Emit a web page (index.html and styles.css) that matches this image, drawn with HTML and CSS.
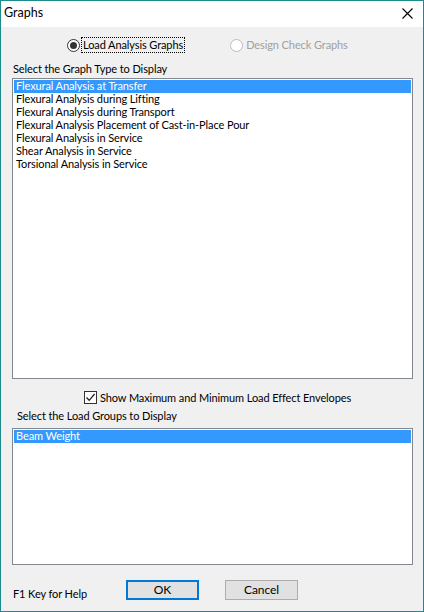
FILE: index.html
```html
<!DOCTYPE html>
<html>
<head>
<meta charset="utf-8">
<link rel="stylesheet" href="styles.css">
</head>
<body>
<div class="window">
  <div class="titlebar">
    <span class="title">Graphs</span>
    <svg class="close" width="11" height="11" viewBox="0 0 11 11"><path d="M0.5 0.5 L10.5 10.5 M10.5 0.5 L0.5 10.5" stroke="#000" stroke-width="1.1" fill="none"/></svg>
  </div>
  <div class="content">
    <div class="radios">
      <div class="radio-group first">
        <span class="radio checked"><span class="dot"></span></span>
        <span class="radio-label focus">Load Analysis Graphs</span>
      </div>
      <div class="radio-group second disabled">
        <span class="radio"></span>
        <span class="radio-label">Design Check Graphs</span>
      </div>
    </div>
    <div class="label first-label">Select the Graph Type to Display</div>
    <div class="listbox list-types">
      <div class="item selected">Flexural Analysis at Transfer</div>
      <div class="item">Flexural Analysis during Lifting</div>
      <div class="item">Flexural Analysis during Transport</div>
      <div class="item">Flexural Analysis Placement of Cast-in-Place Pour</div>
      <div class="item">Flexural Analysis in Service</div>
      <div class="item">Shear Analysis in Service</div>
      <div class="item">Torsional Analysis in Service</div>
    </div>
    <div class="check-row">
      <span class="checkbox"><svg width="11" height="11" viewBox="0 0 11 11"><path d="M1.5 5.5 L4.2 8.3 L9.6 2" stroke="#222" stroke-width="1.3" fill="none"/></svg></span>
      <span class="check-label">Show Maximum and Minimum Load Effect Envelopes</span>
    </div>
    <div class="label second-label">Select the Load Groups to Display</div>
    <div class="listbox list-groups">
      <div class="item selected">Beam Weight</div>
    </div>
    <div class="footer">
      <span class="help">F1 Key for Help</span>
      <button class="btn default">OK</button>
      <button class="btn cancel">Cancel</button>
    </div>
  </div>
</div>
</body>
</html>
```

FILE: styles.css
```css
html, body {
  margin: 0;
  padding: 0;
}
body {
  font-family: "Lato", "Noto Sans", sans-serif;
  font-size: 11px;
  letter-spacing: -0.1px;
  color: #000;
  background: #f0f0f0;
}
.window {
  width: 424px;
  height: 612px;
  box-sizing: border-box;
  border: 1px solid #1d8b8b;
  background: #f0f0f0;
  display: flex;
  flex-direction: column;
}
.titlebar {
  height: 26px;
  background: #fff;
  display: flex;
  align-items: center;
  justify-content: space-between;
  padding: 0 10px 0 3px;
  flex: none;
}
.title {
  font-size: 12.5px;
  line-height: 16px;
  margin-top: -2px;
  letter-spacing: 0;
}
.close {
  display: block;
  margin-top: -1px;
}
.content {
  flex: 1;
  display: flex;
  flex-direction: column;
  padding: 0 10px 0 11px;
}
.radios {
  display: flex;
  margin-top: 10px;
  height: 16px;
  align-items: center;
}
.radio-group {
  display: flex;
  align-items: center;
  gap: 2px;
}
.radio-group.first {
  margin-left: 55px;
}
.radio-group.second {
  margin-left: 46px;
}
.radio {
  width: 13px;
  height: 13px;
  box-sizing: border-box;
  border: 1px solid #333;
  border-radius: 50%;
  background: #fff;
  display: flex;
  align-items: center;
  justify-content: center;
}
.radio .dot {
  width: 7px;
  height: 7px;
  border-radius: 50%;
  background: #333;
}
.radio-label {
  line-height: 14px;
  padding: 0 1px;
}
.radio-label.focus {
  outline: 1px dotted #000;
}
.disabled .radio {
  border-color: #bcbcbc;
}
.disabled .radio-label {
  color: #a0a0a0;
}
.label {
  line-height: 14px;
}
.first-label {
  margin-top: 9px;
  margin-left: 1px;
}
.listbox {
  border: 1px solid #828790;
  background: #fff;
  padding: 1px;
  box-sizing: border-box;
  width: 401px;
}
.list-types {
  margin-top: 2px;
  height: 301px;
}
.list-groups {
  margin-top: 5px;
  height: 137px;
}
.item {
  height: 13px;
  line-height: 12px;
  padding-left: 2px;
  white-space: nowrap;
}
.item.selected {
  background: #3399ff;
  color: #fff;
}
.check-row {
  display: flex;
  align-items: center;
  margin-top: 10px;
  margin-left: 72px;
  height: 16px;
  gap: 3px;
}
.checkbox {
  width: 13px;
  height: 13px;
  box-sizing: border-box;
  border: 1px solid #333;
  background: #fff;
  display: flex;
  align-items: center;
  justify-content: center;
}
.checkbox svg {
  display: block;
}
.second-label {
  margin-top: 4px;
  margin-left: 5px;
}
.footer {
  display: flex;
  align-items: flex-start;
  margin-top: 15px;
}
.help {
  margin-left: 1px;
  margin-top: 7px;
  width: 113px;
  line-height: 14px;
}
.btn {
  font-family: inherit;
  font-size: 12px;
  letter-spacing: -0.1px;
  color: #000;
  background: #e1e1e1;
  width: 73px;
  height: 20px;
  box-sizing: border-box;
  padding: 0;
  margin: 0;
  line-height: 16px;
}
.btn.default {
  border: 2px solid #0078d7;
}
.btn.cancel {
  border: 1px solid #adadad;
  margin-left: 26px;
}
```
